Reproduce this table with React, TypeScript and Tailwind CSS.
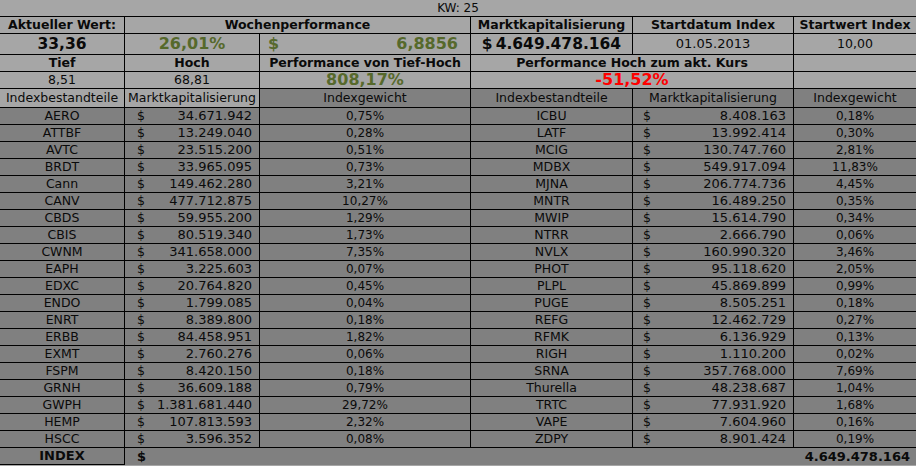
import React from "react";

const left: [string, string, string][] = [
  ["AERO", "34.671.942", "0,75%"],
  ["ATTBF", "13.249.040", "0,28%"],
  ["AVTC", "23.515.200", "0,51%"],
  ["BRDT", "33.965.095", "0,73%"],
  ["Cann", "149.462.280", "3,21%"],
  ["CANV", "477.712.875", "10,27%"],
  ["CBDS", "59.955.200", "1,29%"],
  ["CBIS", "80.519.340", "1,73%"],
  ["CWNM", "341.658.000", "7,35%"],
  ["EAPH", "3.225.603", "0,07%"],
  ["EDXC", "20.764.820", "0,45%"],
  ["ENDO", "1.799.085", "0,04%"],
  ["ENRT", "8.389.800", "0,18%"],
  ["ERBB", "84.458.951", "1,82%"],
  ["EXMT", "2.760.276", "0,06%"],
  ["FSPM", "8.420.150", "0,18%"],
  ["GRNH", "36.609.188", "0,79%"],
  ["GWPH", "1.381.681.440", "29,72%"],
  ["HEMP", "107.813.593", "2,32%"],
  ["HSCC", "3.596.352", "0,08%"],
];

const right: [string, string, string][] = [
  ["ICBU", "8.408.163", "0,18%"],
  ["LATF", "13.992.414", "0,30%"],
  ["MCIG", "130.747.760", "2,81%"],
  ["MDBX", "549.917.094", "11,83%"],
  ["MJNA", "206.774.736", "4,45%"],
  ["MNTR", "16.489.250", "0,35%"],
  ["MWIP", "15.614.790", "0,34%"],
  ["NTRR", "2.666.790", "0,06%"],
  ["NVLX", "160.990.320", "3,46%"],
  ["PHOT", "95.118.620", "2,05%"],
  ["PLPL", "45.869.899", "0,99%"],
  ["PUGE", "8.505.251", "0,18%"],
  ["REFG", "12.462.729", "0,27%"],
  ["RFMK", "6.136.929", "0,13%"],
  ["RIGH", "1.110.200", "0,02%"],
  ["SRNA", "357.768.000", "7,69%"],
  ["Thurella", "48.238.687", "1,04%"],
  ["TRTC", "77.931.920", "1,68%"],
  ["VAPE", "7.604.960", "0,16%"],
  ["ZDPY", "8.901.424", "0,19%"],
];

const cellBase = "border-black border-b flex items-center overflow-hidden whitespace-nowrap";
const cellVis = "border-black border-b flex items-center overflow-visible whitespace-nowrap";
const light = "bg-[#a6a6a6]";
const dark = "bg-[#808080]";
const green = "text-[#56692c]";

export default function App() {
  return (
    <div
      className="w-[916px] h-[466px] bg-[#a6a6a6] text-[12.5px] leading-[14px] text-[#0a0a0a] overflow-hidden"
      style={{ fontFamily: '"DejaVu Sans", Verdana, sans-serif' }}
    >
      <div className="h-[16px] flex items-center justify-center text-[12px]">KW: 25</div>
      <div className="grid grid-cols-[125px_135px_211px_162px_161px_122px] grid-rows-[17px_21px_17px_17px_19px_repeat(21,17px)] border-t border-black">
        {/* Row 1 */}
        <div className={`${cellBase} border-r justify-center font-bold`}>Aktueller Wert:</div>
        <div className={`${cellBase} border-r justify-center font-bold col-span-2`}>Wochenperformance</div>
        <div className={`${cellBase} border-r justify-center font-bold`}>Marktkapitalisierung</div>
        <div className={`${cellBase} border-r justify-center font-bold`}>Startdatum Index</div>
        <div className={`${cellBase} justify-center font-bold`}>Startwert Index</div>

        {/* Row 2 */}
        <div className={`${cellVis} border-r justify-center font-bold text-[15.5px]`}>33,36</div>
        <div className={`${cellVis} border-r justify-center font-bold text-[16px] ${green}`}>26,01%</div>
        <div className={`${cellVis} border-r justify-between pl-[8px] pr-[12px] font-bold text-[16px] ${green}`}>
          <span>$</span>
          <span>6,8856</span>
        </div>
        <div className={`${cellVis} border-r justify-center font-bold text-[15.5px]`}>
          <span>$</span>
          <span className="ml-[3px]">4.649.478.164</span>
        </div>
        <div className={`${cellBase} border-r justify-center text-[13px]`}>01.05.2013</div>
        <div className={`${cellBase} justify-center text-[12.5px]`}>10,00</div>

        {/* Row 3 */}
        <div className={`${cellBase} border-r justify-center font-bold`}>Tief</div>
        <div className={`${cellBase} border-r justify-center font-bold`}>Hoch</div>
        <div className={`${cellBase} border-r justify-center font-bold`}>Performance von Tief-Hoch</div>
        <div className={`${cellBase} border-r justify-center font-bold col-span-2`}>Performance Hoch zum akt. Kurs</div>
        <div className={`${cellBase}`}></div>

        {/* Row 4 */}
        <div className={`${cellBase} border-r justify-center`}>8,51</div>
        <div className={`${cellBase} border-r justify-center`}>68,81</div>
        <div className={`${cellVis} border-r justify-center font-bold text-[16px] leading-[16px] ${green}`}>808,17%</div>
        <div className={`${cellVis} border-r justify-center font-bold text-[16px] leading-[16px] text-[#ff0000] col-span-2`}>-51,52%</div>
        <div className={`${cellBase}`}></div>

        {/* Header row */}
        <div className={`${cellBase} border-r justify-center ${light}`}>Indexbestandteile</div>
        <div className={`${cellBase} border-r justify-center ${light}`}>Marktkapitalisierung</div>
        <div className={`${cellBase} border-r justify-center ${dark}`}>Indexgewicht</div>
        <div className={`${cellBase} border-r justify-center ${dark}`}>Indexbestandteile</div>
        <div className={`${cellBase} border-r justify-center ${dark}`}>Marktkapitalisierung</div>
        <div className={`${cellBase} justify-center ${dark}`}>Indexgewicht</div>

        {/* Data rows */}
        {left.map((l, i) => {
          const r = right[i];
          return (
            <React.Fragment key={l[0]}>
              <div className={`${cellBase} border-r justify-center ${dark}`}>{l[0]}</div>
              <div className={`${cellBase} border-r justify-between pl-[12px] pr-[7px] ${dark}`}>
                <span>$</span>
                <span className="text-[13px]">{l[1]}</span>
              </div>
              <div className={`${cellBase} border-r justify-center text-[12px] ${dark}`}>{l[2]}</div>
              <div className={`${cellBase} border-r justify-center ${dark}`}>{r[0]}</div>
              <div className={`${cellBase} border-r justify-between pl-[10px] pr-[7px] ${dark}`}>
                <span>$</span>
                <span className="text-[13px]">{r[1]}</span>
              </div>
              <div className={`${cellBase} justify-center text-[12px] ${dark}`}>{r[2]}</div>
            </React.Fragment>
          );
        })}

        {/* INDEX row */}
        <div className={`${cellBase} border-r justify-center font-bold text-[13px] ${dark}`}>INDEX</div>
        <div className={`flex items-center pl-[12px] font-bold text-[13px] ${dark}`}>$</div>
        <div className={`col-span-3 ${dark}`}></div>
        <div className={`flex items-center justify-end pr-[6px] font-bold text-[13px] ${dark}`}>4.649.478.164</div>
      </div>
    </div>
  );
}
